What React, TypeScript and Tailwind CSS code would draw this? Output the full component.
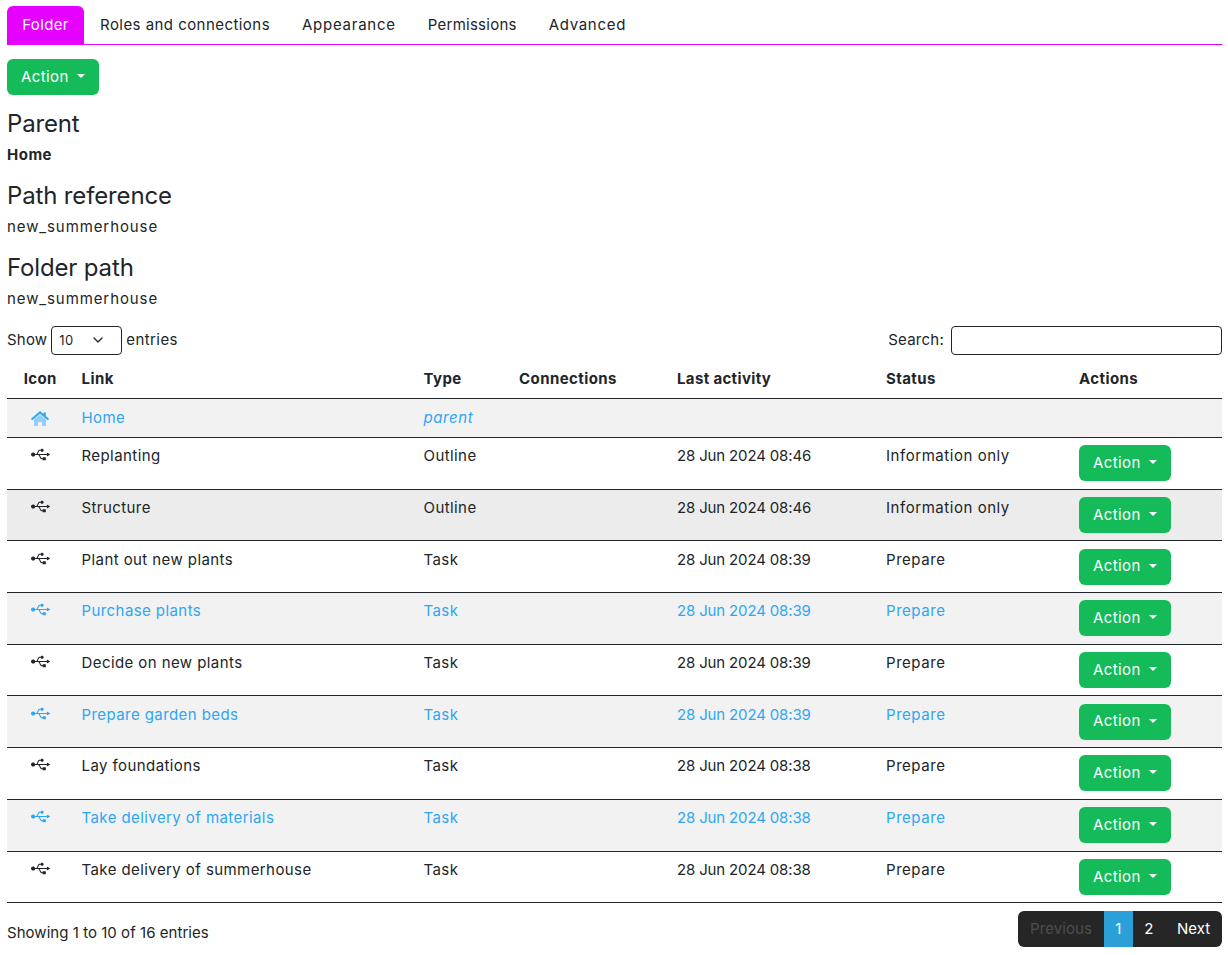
import React from "react";
import {ChevronDown} from "lucide-react";
import {FaUsb} from "react-icons/fa";

const font = "font-['Inter','Open_Sans',sans-serif]";

const rows = [
  {name: "Replanting", type: "Outline", date: "28 Jun 2024 08:46", status: "Information only"},
  {name: "Structure", type: "Outline", date: "28 Jun 2024 08:46", status: "Information only", hover: true},
  {name: "Plant out new plants", type: "Task", date: "28 Jun 2024 08:39", status: "Prepare"},
  {name: "Purchase plants", type: "Task", date: "28 Jun 2024 08:39", status: "Prepare", link: true},
  {name: "Decide on new plants", type: "Task", date: "28 Jun 2024 08:39", status: "Prepare"},
  {name: "Prepare garden beds", type: "Task", date: "28 Jun 2024 08:39", status: "Prepare", link: true},
  {name: "Lay foundations", type: "Task", date: "28 Jun 2024 08:38", status: "Prepare"},
  {name: "Take delivery of materials", type: "Task", date: "28 Jun 2024 08:38", status: "Prepare", link: true},
  {name: "Take delivery of summerhouse", type: "Task", date: "28 Jun 2024 08:38", status: "Prepare"},
];

function ActionButton() {
  return (
    <button className="flex h-9 w-[92px] items-center rounded-md bg-[#14bb58] pl-[14px] text-[15px] tracking-[0.4px] text-white">
      Action
      <span className="ml-[8px] mt-[-2px] h-0 w-0 border-x-[4.5px] border-t-[4.5px] border-x-transparent border-t-white"/>
    </button>
  );
}

function HomeIcon() {
  return (
    <svg viewBox="0 0 18 15" className="mx-auto h-[15px] w-[18px]">
      <path d="M3 8.500 9 3.800l6 4.700V15h-4v-4H7v4H3z" fill="#90cffa"/>
      <path d="M9 0l3.500 3V1.500h2.300v3.500L18 7.800l-1.200 1.400L9 2.800 1.200 9.200 0 7.800z" fill="#2ea6f2"/>
    </svg>
  );
}

export default function App() {
  return (
    <div className={`${font} min-h-[955px] bg-white px-[7px] pt-[6px] pr-[6px] text-[15px] leading-[22.5px] tracking-[0.42px] text-[#212529]`}>
      <nav className="flex h-[39px] border-b border-[#e600ff]">
        <a className="flex h-[38px] w-[77px] items-center justify-center rounded-t-md bg-[#e600ff] tracking-[0.35px] text-white">Folder</a>
        <a className="flex h-[38px] items-center px-[16px] tracking-[0.45px]">Roles and connections</a>
        <a className="flex h-[38px] items-center px-[16px] tracking-[0.75px]">Appearance</a>
        <a className="flex h-[38px] items-center px-[16px] tracking-[0.25px]">Permissions</a>
        <a className="flex h-[38px] items-center px-[16px] tracking-[0.7px]">Advanced</a>
      </nav>

      <div className="mt-[14px]">
        <ActionButton/>
      </div>

      <h5 className="mt-[14px] text-[24px] leading-[29px] tracking-[-0.15px]">Parent</h5>
      <p className="mt-[6px] font-bold tracking-[0.5px]">Home</p>
      <h5 className="mt-[14px] text-[24px] leading-[29px] tracking-[-0.15px]">Path reference</h5>
      <p className="mt-[6px] tracking-[0.9px]">new_summerhouse</p>
      <h5 className="mt-[15px] text-[24px] leading-[29px] tracking-[-0.15px]">Folder path</h5>
      <p className="mt-[6px] tracking-[0.9px]">new_summerhouse</p>

      <div className="mt-[15px] flex items-center justify-between">
        <div className="flex items-center">
          <span className="tracking-[0.2px]">Show</span>
          <div className="mx-[4px] flex h-[29px] w-[71px] items-center justify-between rounded-[4px] border border-[#212529] pl-[7px] pr-[15px] text-[13px]">
            10
            <ChevronDown size={16} strokeWidth={2}/>
          </div>
          entries
        </div>
        <div className="flex items-center">
          <span className="tracking-[0.25px]">Search:</span>
          <div className="ml-[7px] h-[29px] w-[271px] rounded-[4px] border border-[#212529]"/>
        </div>
      </div>

      <table className="mt-[5px] w-[1215px] table-fixed border-collapse">
        <thead>
          <tr className="h-[39px] border-b border-[#212529] text-left font-bold">
            <th className="w-[58.500px] pl-[8px] text-center tracking-[0.35px]">Icon</th>
            <th className="w-[342px] pl-[16px]">Link</th>
            <th className="w-[95.500px] pl-[16px]">Type</th>
            <th className="w-[158px] pl-[16px]">Connections</th>
            <th className="w-[209px] pl-[16px] tracking-[0.35px]">Last activity</th>
            <th className="w-[193px] pl-[16px]">Status</th>
            <th className="pl-[16px]">Actions</th>
          </tr>
        </thead>
        <tbody>
          <tr className="h-[39px] border-b border-[#212529] bg-[#f2f2f2] text-[#2ea6f2]">
            <td className="pl-[8px]"><HomeIcon/></td>
            <td className="pl-[16px]">Home</td>
            <td className="pl-[16px] italic tracking-[0.6px]">parent</td>
            <td colSpan={4}/>
          </tr>
          {rows.map((r) => (
            <tr
              key={r.name}
              className={`h-[51.700px] border-b border-[#212529] align-top ${r.hover ? "bg-[#ececec]" : r.link ? "bg-[#f2f2f2] text-[#2ea6f2]" : "bg-white"}`}
            >
              <td className="pl-[8px] pt-[7.300px]"><FaUsb className="mx-auto" size={19}/></td>
              <td className="pl-[16px] pt-[7.300px]">{r.name}</td>
              <td className="pl-[16px] pt-[7.300px]">{r.type}</td>
              <td/>
              <td className="pl-[16px] pt-[7.300px] tracking-[-0.15px]">{r.date}</td>
              <td className="pl-[16px] pt-[7.300px] tracking-[0.55px]">{r.status}</td>
              <td className="pl-[16px] pt-[7.300px]"><ActionButton/></td>
            </tr>
          ))}
        </tbody>
      </table>

      <div className="mt-[8px] flex items-start justify-between">
        <div className="pt-[11px] tracking-[0.04px]">Showing 1 to 10 of 16 entries</div>
        <div className="flex h-9 items-center overflow-hidden rounded-md bg-[#262626] text-white">
          <span className="px-[12px] tracking-[0.1px] text-[#4d4d4d]">Previous</span>
          <span className="flex h-full w-[29px] items-center justify-center bg-[#2a9fd8]">1</span>
          <span className="flex h-full w-[32px] items-center justify-center">2</span>
          <span className="px-[12px] tracking-[-0.05px]">Next</span>
        </div>
      </div>
    </div>
  );
}
